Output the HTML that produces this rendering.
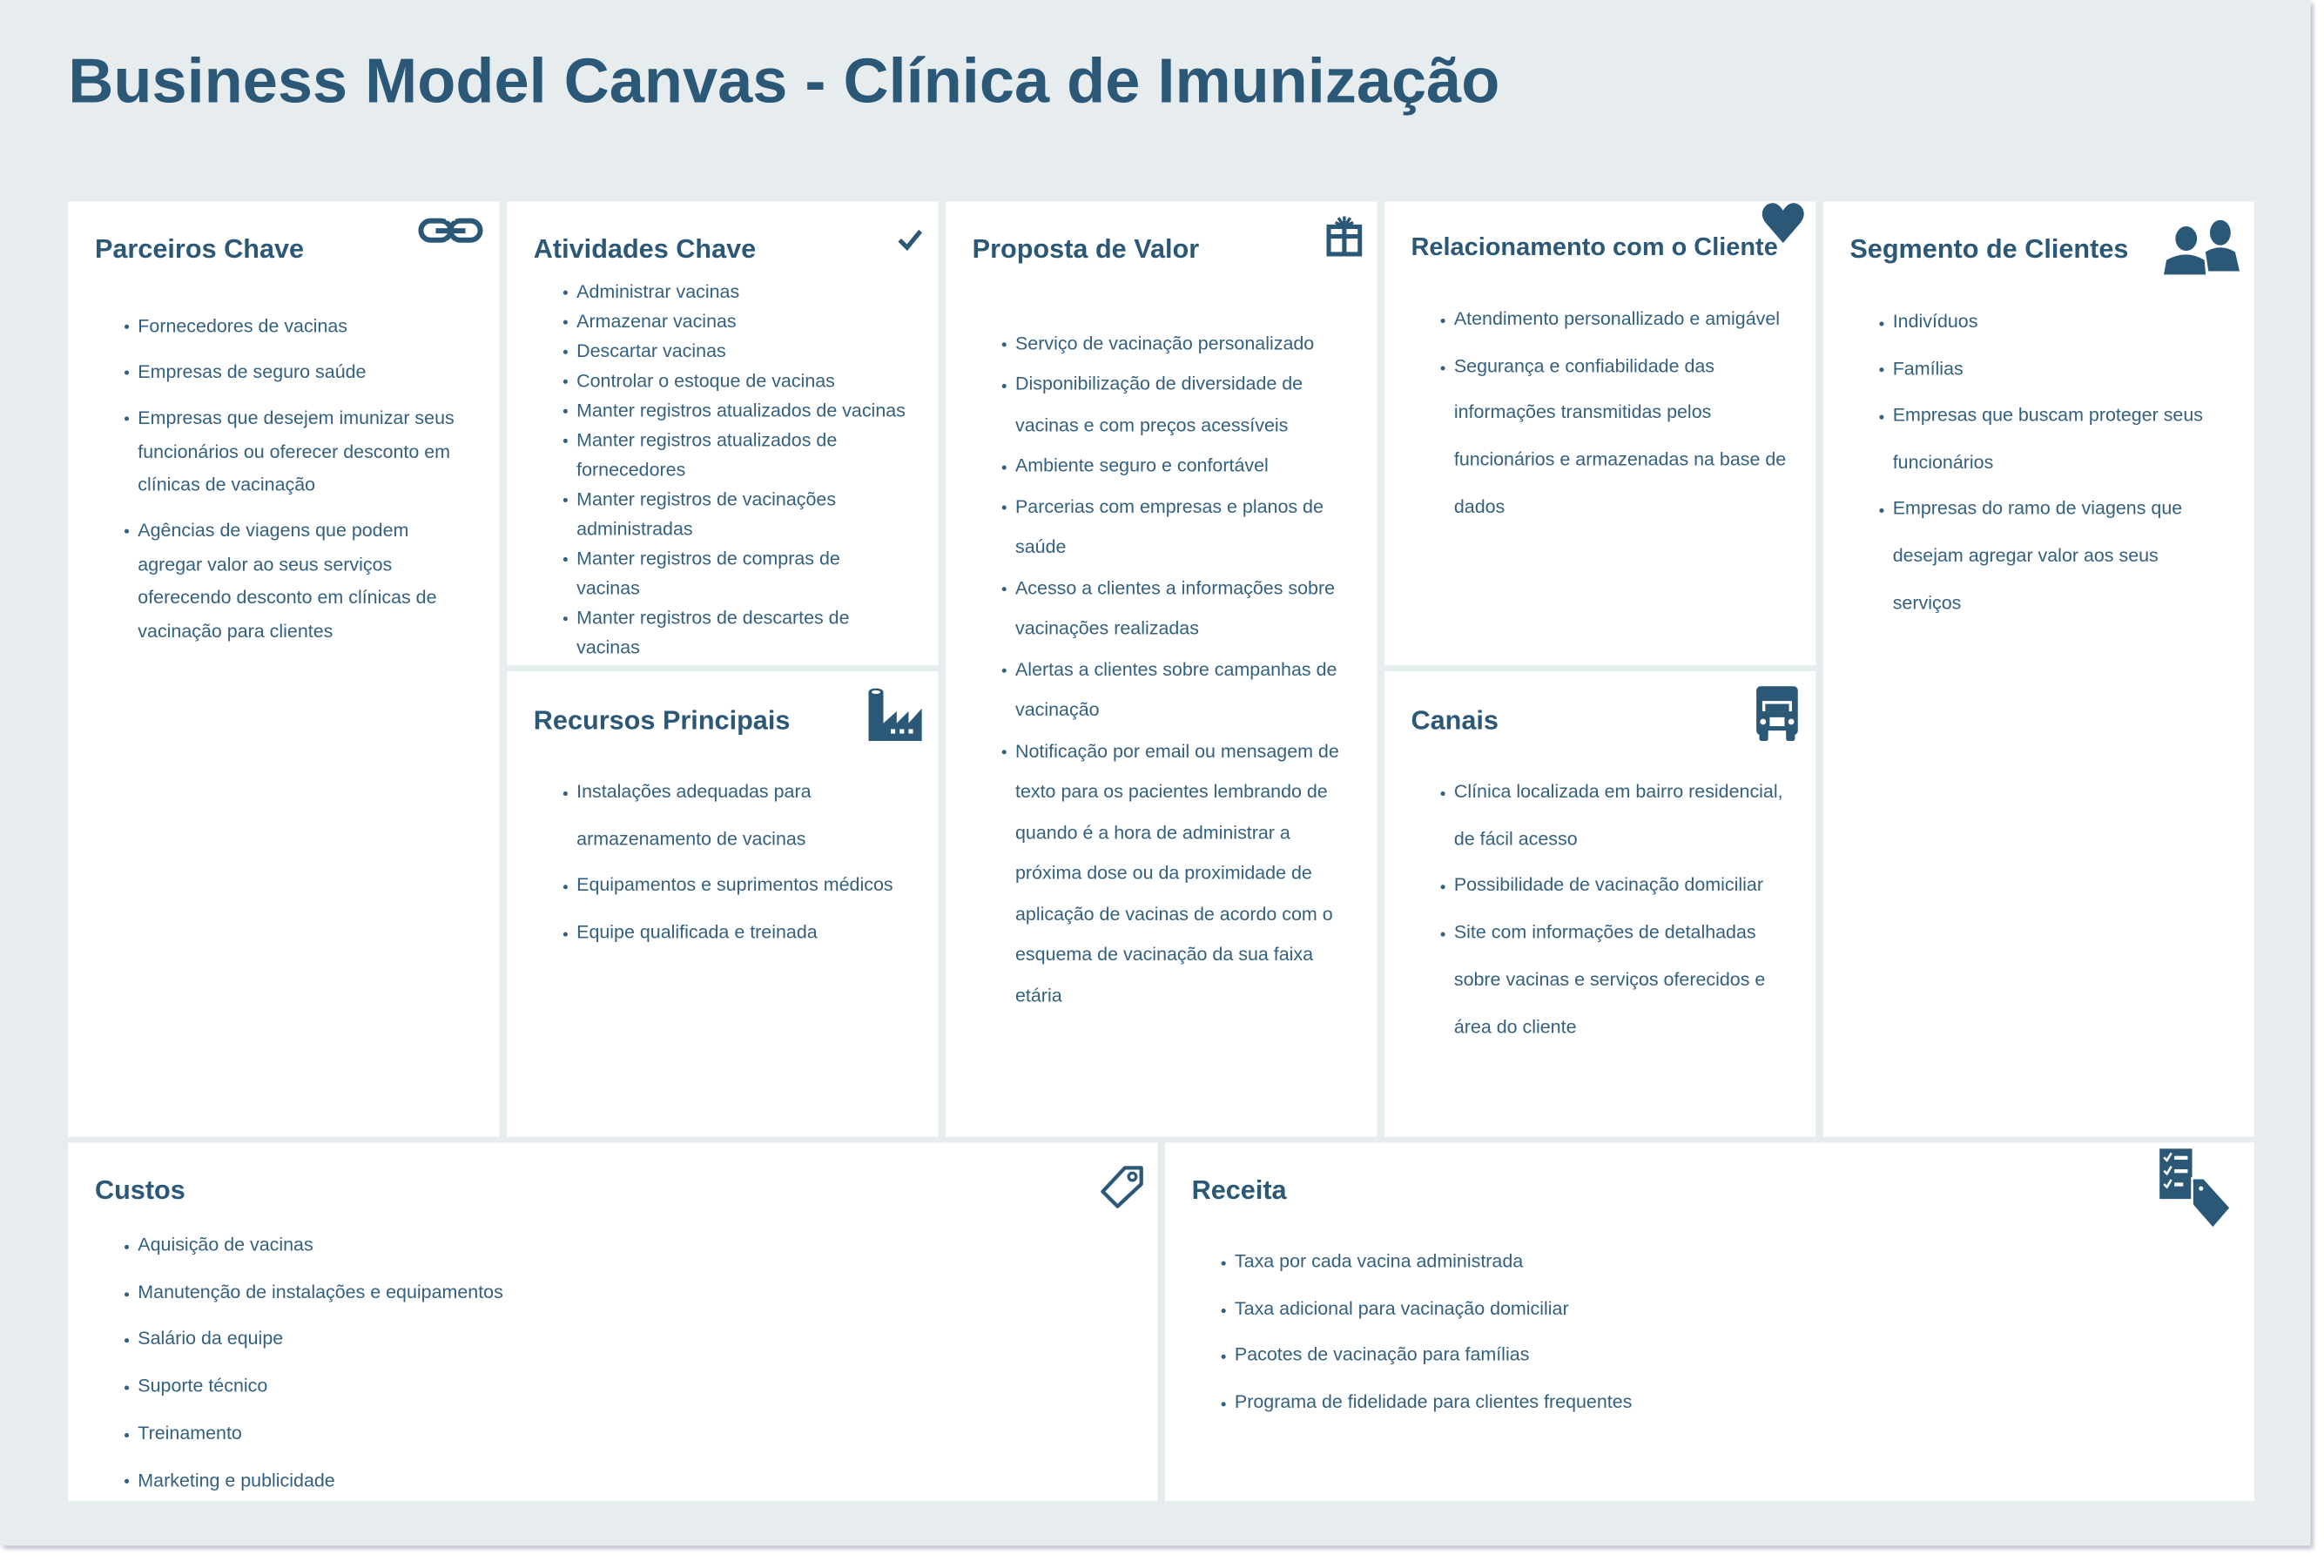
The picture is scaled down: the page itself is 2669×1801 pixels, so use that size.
<!DOCTYPE html>
<html><head><meta charset="utf-8">
<style>
html,body{margin:0;padding:0;background:#fff;width:2669px;height:1800px;overflow:hidden}
#w{position:absolute;left:0;top:0;width:1570px;height:1058px;transform:scale(1.7022);transform-origin:0 0;font-family:"Liberation Sans",Arial,sans-serif;color:#2c5877}
#bg{position:absolute;left:0;top:0;width:1559px;height:1043px;background:#e7ecef;box-shadow:2px 2px 3px #b9bccd}
h1{position:absolute;left:46px;top:31px;margin:0;font-size:42.4px;font-weight:bold;color:#2c5877;white-space:nowrap}
.c{position:absolute;background:#fff}
.h{position:absolute;font-size:18px;font-weight:bold;white-space:nowrap;color:#2c5877}
ul{position:absolute;margin:0;padding:0;list-style:none;font-size:12.6px;color:#34607f}
li{position:relative}
li:before{content:"";position:absolute;left:-9px;width:3px;height:3px;border-radius:50%;background:#34607f;top:calc(var(--lh) / 2 - 1px)}
.ic{position:absolute}
</style></head><body>
<div id="w">
<div id="bg"></div>
<h1>Business Model Canvas - Clínica de Imunização</h1>

<div class="c" style="left:46px;top:136px;width:291px;height:631px"></div>
<div class="h" style="left:64px;top:158px">Parceiros Chave</div>
<svg class="ic" style="left:282px;top:146px" width="44" height="20" viewBox="0 0 44 20"><rect x="2" y="3" width="20" height="13" rx="6.5" fill="none" stroke="#2c5877" stroke-width="3.5"/><rect x="22" y="3" width="20" height="13" rx="6.5" fill="none" stroke="#2c5877" stroke-width="3.5"/><rect x="12" y="8" width="20" height="3.5" fill="#2c5877"/><rect x="19" y="0" width="6" height="3" fill="#fff"/><rect x="19" y="16.5" width="6" height="3" fill="#fff"/></svg>
<ul style="left:93px;top:209px;width:218px;line-height:22.5px;--lh:22.5px">
<li>Fornecedores de vacinas</li>
<li style="margin-top:8.5px">Empresas de seguro saúde</li>
<li style="margin-top:8.5px">Empresas que desejem imunizar seus funcionários ou oferecer desconto em clínicas de vacinação</li>
<li style="margin-top:8.5px">Agências de viagens que podem agregar valor ao seus serviços oferecendo desconto em clínicas de vacinação para clientes</li>
</ul>

<div class="c" style="left:342px;top:136px;width:291px;height:313px"></div>
<div class="h" style="left:360px;top:158px">Atividades Chave</div>
<svg class="ic" style="left:605px;top:154px" width="18" height="16" viewBox="0 0 18 16"><path d="M2 8 L7 13 L16 2" fill="none" stroke="#2c5877" stroke-width="3"/></svg>
<ul style="left:389px;top:187px;width:223.5px;line-height:20px;--lh:20px">
<li>Administrar vacinas</li><li>Armazenar vacinas</li><li>Descartar vacinas</li><li>Controlar o estoque de vacinas</li><li style="white-space:nowrap">Manter registros atualizados de vacinas</li><li>Manter registros atualizados de fornecedores</li><li>Manter registros de vacinações administradas</li><li>Manter registros de compras de<br>vacinas</li><li>Manter registros de descartes de vacinas</li>
</ul>

<div class="c" style="left:342px;top:453px;width:291px;height:314px"></div>
<div class="h" style="left:360px;top:476px">Recursos Principais</div>
<svg class="ic" style="left:586px;top:464px" width="36" height="36" viewBox="0 0 36 36"><rect x="0" y="3" width="10" height="33" fill="#2c5877"/><ellipse cx="5" cy="3" rx="5" ry="2.5" fill="#2c5877"/><ellipse cx="5" cy="3" rx="3" ry="1.2" fill="#fff"/><path d="M10 36 V24 L19 16 V24 L27 16 V24 L36 14 V36 Z" fill="#2c5877"/><rect x="15" y="28" width="3" height="3" fill="#fff"/><rect x="21" y="28" width="3" height="3" fill="#fff"/><rect x="27" y="28" width="3" height="3" fill="#fff"/></svg>
<ul style="left:389px;top:519px;width:228px;line-height:31.7px;--lh:31.7px">
<li>Instalações adequadas para armazenamento de vacinas</li><li>Equipamentos e suprimentos médicos</li><li>Equipe qualificada e treinada</li>
</ul>

<div class="c" style="left:638px;top:136px;width:291px;height:631px"></div>
<div class="h" style="left:656px;top:158px">Proposta de Valor</div>
<svg class="ic" style="left:895px;top:145px" width="24" height="28" viewBox="0 0 24 28"><rect x="1.5" y="8" width="21" height="18.5" fill="none" stroke="#2c5877" stroke-width="3"/><rect x="1" y="13" width="22" height="3" fill="#2c5877"/><rect x="10.5" y="8" width="3" height="19" fill="#2c5877"/><path d="M12 8 L8 2 M12 8 L16 2 M12 8 V1 M12 8 L6 5 M12 8 L18 5" stroke="#2c5877" stroke-width="2"/></svg>
<ul style="left:685px;top:218.5px;width:228px;line-height:27.5px;--lh:27.5px">
<li>Serviço de vacinação personalizado</li><li>Disponibilização de diversidade de vacinas e com preços acessíveis</li><li>Ambiente seguro e confortável</li><li>Parcerias com empresas e planos de saúde</li><li>Acesso a clientes a informações sobre vacinações realizadas</li><li>Alertas a clientes sobre campanhas de vacinação</li><li>Notificação por email ou mensagem de texto para os pacientes lembrando de quando é a hora de administrar a próxima dose ou da proximidade de aplicação de vacinas de acordo com o esquema de vacinação da sua faixa etária</li>
</ul>

<div class="c" style="left:934px;top:136px;width:291px;height:313px"></div>
<div class="h" style="left:952px;top:157px;font-size:17px">Relacionamento com o Cliente</div>
<svg class="ic" style="left:1188px;top:136px" width="30" height="30" viewBox="0 0 30 30"><path d="M15 28 L3 14 C-2 7 3 1 8 1 C11 1 13 3 15 6 C17 3 19 1 22 1 C27 1 32 7 27 14 Z" fill="#2c5877"/></svg>
<ul style="left:981px;top:200px;width:230px;line-height:31.7px;--lh:31.7px">
<li>Atendimento personallizado e amigável</li><li>Segurança e confiabilidade das informações transmitidas pelos funcionários e armazenadas na base de dados</li>
</ul>

<div class="c" style="left:934px;top:453px;width:291px;height:314px"></div>
<div class="h" style="left:952px;top:476px">Canais</div>
<svg class="ic" style="left:1184px;top:463px" width="30" height="37" viewBox="0 0 30 37"><rect x="1" y="0" width="28" height="33" rx="3" fill="#2c5877"/><rect x="5" y="10" width="20" height="7" fill="#fff"/><rect x="7" y="12" width="16" height="5" fill="#2c5877"/><circle cx="5.5" cy="24" r="2" fill="#fff"/><circle cx="24.5" cy="24" r="2" fill="#fff"/><rect x="10" y="21" width="10" height="6" fill="#fff"/><rect x="3" y="30" width="6" height="7" rx="1.5" fill="#2c5877"/><rect x="21" y="30" width="6" height="7" rx="1.5" fill="#2c5877"/><rect x="9" y="30" width="12" height="7" fill="#fff"/></svg>
<ul style="left:981px;top:519px;width:232px;line-height:31.7px;--lh:31.7px">
<li>Clínica localizada em bairro residencial, de fácil acesso</li><li>Possibilidade de vacinação domiciliar</li><li>Site com informações de detalhadas sobre vacinas e serviços oferecidos e área do cliente</li>
</ul>

<div class="c" style="left:1230px;top:136px;width:291px;height:631px"></div>
<div class="h" style="left:1248px;top:158px">Segmento de Clientes</div>
<svg class="ic" style="left:1458px;top:148px" width="54" height="38" viewBox="0 0 54 38"><ellipse cx="40" cy="9" rx="7" ry="8.5" fill="#2c5877"/><path d="M30 22 Q40 16 50 22 L53 35 L32 35 Z" fill="#2c5877"/><ellipse cx="17" cy="13" rx="8" ry="9" fill="#2c5877" stroke="#fff" stroke-width="1.5"/><path d="M3 27 Q17 19 30 27 L31 38 L1 38 Z" fill="#2c5877" stroke="#fff" stroke-width="1.5"/></svg>
<ul style="left:1277px;top:202px;width:222px;line-height:31.6px;--lh:31.6px">
<li>Indivíduos</li><li>Famílias</li><li>Empresas que buscam proteger seus funcionários</li><li>Empresas do ramo de viagens que desejam agregar valor aos seus serviços</li>
</ul>

<div class="c" style="left:46px;top:771px;width:735px;height:242px"></div>
<div class="h" style="left:64px;top:793px">Custos</div>
<svg class="ic" style="left:742px;top:786px" width="30" height="30" viewBox="0 0 30 30"><path d="M17 2 L28 2 L28 13 L12 28 L2 18 Z" fill="none" stroke="#2c5877" stroke-width="2.5" stroke-linejoin="round"/><circle cx="22" cy="8" r="2.5" fill="none" stroke="#2c5877" stroke-width="2"/></svg>
<ul style="left:93px;top:825px;width:600px;line-height:31.7px;--lh:31.7px">
<li>Aquisição de vacinas</li><li>Manutenção de instalações e equipamentos</li><li>Salário da equipe</li><li>Suporte técnico</li><li>Treinamento</li><li>Marketing e publicidade</li>
</ul>

<div class="c" style="left:786px;top:771px;width:735px;height:242px"></div>
<div class="h" style="left:804px;top:793px">Receita</div>
<svg class="ic" style="left:1457px;top:775px" width="50" height="55" viewBox="0 0 50 55"><rect x="0" y="0" width="22" height="34" fill="#2c5877"/><path d="M3 6 L5 8 L8 3 M3 15 L5 17 L8 12 M3 24 L5 26 L8 21" stroke="#fff" stroke-width="1.5" fill="none"/><rect x="10" y="5" width="9" height="2.5" fill="#fff"/><rect x="10" y="14" width="9" height="2.5" fill="#fff"/><rect x="10" y="23" width="6" height="2.5" fill="#fff"/><path d="M22 20 L30 20 L48 40 L36 54 L22 38 Z" fill="#2c5877" stroke="#fff" stroke-width="1.5"/><circle cx="28" cy="27" r="1.5" fill="#fff"/></svg>
<ul style="left:833px;top:836px;width:600px;line-height:31.7px;--lh:31.7px">
<li>Taxa por cada vacina administrada</li><li>Taxa adicional para vacinação domiciliar</li><li>Pacotes de vacinação para famílias</li><li>Programa de fidelidade para clientes frequentes</li>
</ul>
</div>
</body></html>
